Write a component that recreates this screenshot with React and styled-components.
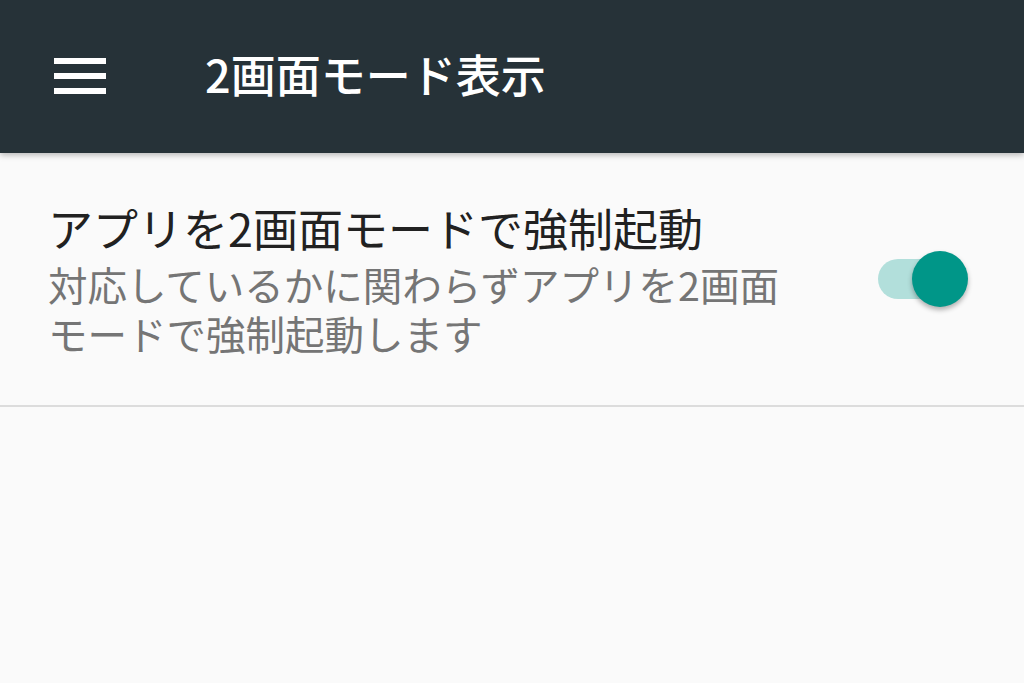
import React, { useState } from 'react';
import styled, { createGlobalStyle } from 'styled-components';

const GlobalStyle = createGlobalStyle`
    html, body {
        margin: 0;
        padding: 0;
        background: #fafafa;
        font-family: "Noto Sans CJK JP", "Noto Sans", sans-serif;
    }
`

const Page = styled.div`
    width: 1024px;
    height: 683px;
    overflow: hidden;
    background: #fafafa;
`

const Toolbar = styled.header`
    position: relative;
    z-index: 1;
    display: flex;
    align-items: center;
    height: 153px;
    padding-left: 54px;
    box-sizing: border-box;
    background: #263238;
    box-shadow: 0 2px 6px rgba(0, 0, 0, 0.28);
`

const MenuButton = styled.div`
    display: flex;
    flex-direction: column;
    justify-content: space-between;
    width: 52px;
    height: 36px;
    margin-top: -2px;
    span {
        display: block;
        height: 6px;
        background: #ffffff;
    }
`

const Title = styled.h1`
    margin: -6px 0 0 99px;
    color: #ffffff;
    font-size: 45px;
    font-weight: 500;
    letter-spacing: 0;
    line-height: 1;
`

const SettingRow = styled.div`
    display: flex;
    align-items: center;
    justify-content: space-between;
    height: 254px;
    padding: 0 56px 0 48px;
    box-sizing: border-box;
    border-bottom: 2px solid #dcdcdc;
`

const TextBlock = styled.div`
    display: flex;
    flex-direction: column;
    gap: 2px;
    margin-top: -2px;
`

const RowTitle = styled.div`
    color: #212121;
    font-size: 45px;
    letter-spacing: 0;
    line-height: 58px;
`

const RowSummary = styled.div`
    width: 760px;
    color: #757575;
    font-size: 39.5px;
    letter-spacing: 0;
    line-height: 49px;
`

const SwitchTrack = styled.div`
    position: relative;
    width: 82px;
    height: 40px;
    margin-right: 8px;
    border-radius: 20px;
    background: ${props => props.on ? '#b2dfdb' : '#bdbdbd'};
    cursor: pointer;
`

const SwitchThumb = styled.div`
    position: absolute;
    top: -8px;
    left: ${props => props.on ? '34px' : '-8px'};
    width: 56px;
    height: 56px;
    border-radius: 50%;
    background: ${props => props.on ? '#009688' : '#f5f5f5'};
    box-shadow: 0 3px 5px rgba(0, 0, 0, 0.3);
    transition: left 0.15s;
`

const Switch = ({on, onToggle}) => {
    return (
        <SwitchTrack on={on} onClick={onToggle}>
            <SwitchThumb on={on} />
        </SwitchTrack>
    )
}

const App = () => {
    const [forced, setForced] = useState(true);
    return (
        <Page>
            <GlobalStyle />
            <Toolbar>
                <MenuButton>
                    <span />
                    <span />
                    <span />
                </MenuButton>
                <Title>2画面モード表示</Title>
            </Toolbar>
            <SettingRow>
                <TextBlock>
                    <RowTitle>アプリを2画面モードで強制起動</RowTitle>
                    <RowSummary>対応しているかに関わらずアプリを2画面モードで強制起動します</RowSummary>
                </TextBlock>
                <Switch on={forced} onToggle={() => setForced(!forced)} />
            </SettingRow>
        </Page>
    );
}

export default App;
